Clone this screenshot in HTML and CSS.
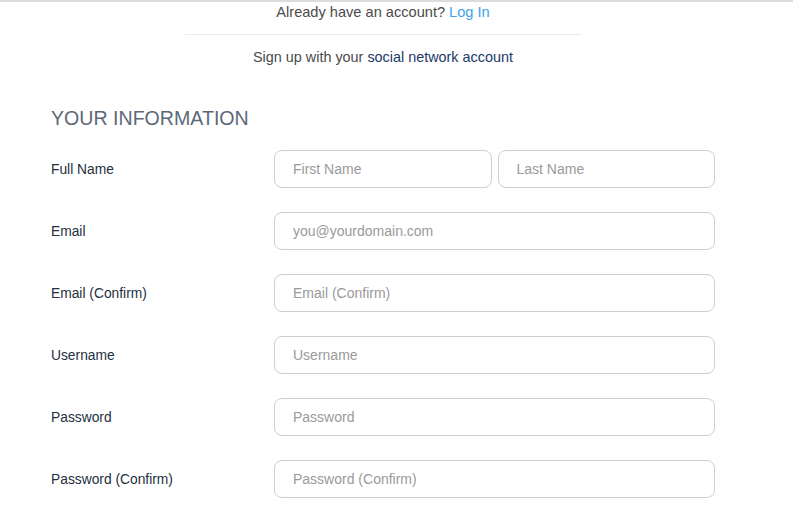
FILE: index.html
```html
<!DOCTYPE html>
<html lang="en">
<head>
<meta charset="utf-8">
<title>Sign Up</title>
<link rel="stylesheet" href="styles.css">
</head>
<body>
<div class="page">
  <p class="login">Already have an account? <a href="#" class="login-link">Log In</a></p>
  <hr class="divider">
  <p class="social">Sign up with your <a href="#" class="social-link">social network account</a></p>
  <h2 class="heading">YOUR INFORMATION</h2>
  <form class="form">
    <label class="label">Full Name</label>
    <div class="pair">
      <input class="field" type="text" placeholder="First Name">
      <input class="field" type="text" placeholder="Last Name">
    </div>
    <label class="label">Email</label>
    <input class="field" type="email" placeholder="you@yourdomain.com">
    <label class="label">Email (Confirm)</label>
    <input class="field" type="email" placeholder="Email (Confirm)">
    <label class="label">Username</label>
    <input class="field" type="text" placeholder="Username">
    <label class="label">Password</label>
    <input class="field" type="password" placeholder="Password">
    <label class="label">Password (Confirm)</label>
    <input class="field" type="password" placeholder="Password (Confirm)">
  </form>
</div>
</body>
</html>
```

FILE: styles.css
```css
html, body {
  margin: 0;
  padding: 0;
  background: #fff;
}
body {
  border-top: 2px solid #dcdcdc;
  font-family: "Liberation Sans", Arial, sans-serif;
  color: #2e3a48;
}
.page {
  width: 766px;
  box-sizing: border-box;
  padding: 0 51px;
}
.login {
  margin: 0;
  text-align: center;
  font-size: 14.6px;
  line-height: 20px;
  color: #4a4a4a;
}
.login-link {
  color: #3ba3e6;
  text-decoration: none;
}
.divider {
  width: 396px;
  margin: 12px auto 0;
  border: 0;
  height: 1px;
  background: #ebebeb;
}
.social {
  margin: 12px 0 0;
  text-align: center;
  font-size: 14.4px;
  line-height: 20px;
  color: #4a4a4a;
}
.social-link {
  color: #1d3766;
  text-decoration: none;
}
.heading {
  margin: 39px 0 0;
  font-size: 19.6px;
  line-height: 24px;
  font-weight: normal;
  color: #5c6877;
}
.form {
  margin-top: 20px;
  display: grid;
  grid-template-columns: 223px 1fr;
  row-gap: 24px;
  align-items: center;
}
.label {
  font-size: 13.8px;
  color: #243040;
}
.pair {
  display: grid;
  grid-template-columns: 1fr 1fr;
  column-gap: 6px;
}
.field {
  box-sizing: border-box;
  width: 100%;
  height: 38px;
  margin: 0;
  padding: 0 18px;
  border: 1px solid #cfcfcf;
  border-radius: 8px;
  font-family: "Liberation Sans", Arial, sans-serif;
  font-size: 14px;
  color: #333;
  background: #fff;
  outline: none;
}
.field::placeholder {
  color: #9a9a9a;
}
```
